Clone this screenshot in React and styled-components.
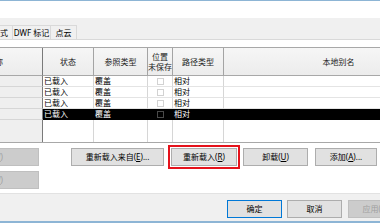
import styled, { createGlobalStyle } from "styled-components";

const GlobalStyle = createGlobalStyle`
  html, body {
    margin: 0;
    padding: 0;
    background: #fff;
  }
  body {
    font-family: "Noto Sans", "Noto Sans CJK SC", sans-serif;
    font-size: 8px;
    color: #000;
  }
`;

const rows = [
  { status: "已载入", type: "覆盖", path: "相对" },
  { status: "已载入", type: "覆盖", path: "相对" },
  { status: "已载入", type: "覆盖", path: "相对" },
  { status: "已载入", type: "覆盖", path: "相对", selected: true },
];

const columns = "43px 51px 54px 25px 51px 230px";

function App() {
  return (
    <>
      <GlobalStyle />
      <Window>
        <TitleBar />
        <TabStrip>
          <Tab $width={50} $offset={-37} $align="flex-end">
            CAD 格式
          </Tab>
          <Tab $width={38}>DWF 标记</Tab>
          <Tab $width={26}>点云</Tab>
        </TabStrip>

        <TabPage>
          <Table>
            <HeaderRow>
              <HeaderCell $first>参照名称</HeaderCell>
              <HeaderCell>状态</HeaderCell>
              <HeaderCell>参照类型</HeaderCell>
              <HeaderCell $twoLine>
                位置
                <br />
                未保存
              </HeaderCell>
              <HeaderCell>路径类型</HeaderCell>
              <HeaderCell>本地别名</HeaderCell>
            </HeaderRow>
            {rows.map((row, i) => (
              <Row key={i}>
                <RowHead />
                <Cell $selected={row.selected}>{row.status}</Cell>
                <Cell $selected={row.selected}>{row.type}</Cell>
                <Cell $selected={row.selected} $center>
                  <Check $selected={row.selected} />
                </Cell>
                <Cell $selected={row.selected}>{row.path}</Cell>
                <Cell $selected={row.selected} />
              </Row>
            ))}
            <FillerRow>
              <RowHead />
              <Cell />
              <Cell />
              <Cell />
              <Cell />
              <Cell />
            </FillerRow>
          </Table>

          <ButtonRow>
            <SideButton disabled>
              保存位置(<u>V</u>)
            </SideButton>
            <Button $width={93} style={{ marginLeft: 32 }}>
              重新载入来自(<u>E</u>)...
            </Button>
            <Highlight>
              <Button $width={66}>
                重新载入(<u>R</u>)
              </Button>
            </Highlight>
            <Button $width={65} style={{ marginLeft: 3 }}>
              卸载(<u>U</u>)
            </Button>
            <Button $width={62} style={{ marginLeft: 7 }}>
              添加(<u>A</u>)...
            </Button>
          </ButtonRow>
          <SecondRow>
            <SideButton disabled>
              管理工作集(<u>W</u>)
            </SideButton>
          </SecondRow>
        </TabPage>

        <Footer>
          <Button $width={55} $default>
            确定
          </Button>
          <Button $width={55}>取消</Button>
          <Button $width={55} disabled style={{ marginLeft: 1 }}>
            应用(<u>A</u>)
          </Button>
        </Footer>
      </Window>
    </>
  );
}

const Window = styled.div`
  width: 380px;
  height: 223px;
  box-sizing: border-box;
  overflow: hidden;
  display: flex;
  flex-direction: column;
  border-top: 1px solid #8db5d5;
  border-bottom: 2px solid #8db5d5;
  background: #f0f0f0;
`;

const TitleBar = styled.div`
  height: 17px;
  background: #fff;
  flex-shrink: 0;
`;

const TabStrip = styled.div`
  height: 21px;
  padding-top: 7px;
  box-sizing: border-box;
  display: flex;
  align-items: stretch;
  flex-shrink: 0;
`;

const Tab = styled.div`
  width: ${(p) => p.$width}px;
  margin-left: ${(p) => p.$offset || 0}px;
  flex-shrink: 0;
  box-sizing: border-box;
  display: flex;
  align-items: center;
  justify-content: ${(p) => p.$align || "center"};
  padding-right: ${(p) => (p.$align ? 4 : 0)}px;
  border: 1px solid #d9d9d9;
  border-bottom: none;
  border-left: none;
  background: #f0f0f0;
  white-space: nowrap;
  line-height: 1;
`;

const TabPage = styled.div`
  flex: 1;
  background: #fff;
  border-top: 1px solid #d9d9d9;
  padding-top: 7px;
  display: flex;
  flex-direction: column;
`;

const Table = styled.div`
  display: grid;
  grid-template-columns: ${columns};
  width: 454px;
  border-top: 1px solid #a8a8a8;
  border-bottom: 1px solid #a8a8a8;
`;

const HeaderRow = styled.div`
  display: contents;
`;

const HeaderCell = styled.div`
  height: 28px;
  box-sizing: border-box;
  background: linear-gradient(#f6f6f6, #ececec);
  border-right: 1px solid ${(p) => (p.$first ? "#7a7a7a" : "#a4a4a4")};
  border-bottom: 1px solid #a8a8a8;
  display: flex;
  align-items: center;
  justify-content: ${(p) => (p.$first ? "flex-end" : "center")};
  padding-right: ${(p) => (p.$first ? 39 : 0)}px;
  text-align: center;
  line-height: ${(p) => (p.$twoLine ? "10px" : "1")};
  white-space: nowrap;
  color: #222;
`;

const Row = styled.div`
  display: contents;
`;

const FillerRow = styled.div`
  display: contents;

  & > div {
    height: 22px;
    border-bottom: none;
  }
`;

const RowHead = styled.div`
  height: 11px;
  box-sizing: border-box;
  background: #efefef;
  border-right: 1px solid #7a7a7a;
  border-bottom: 1px solid #d6d6d6;
`;

const Cell = styled.div`
  height: 11px;
  box-sizing: border-box;
  padding-left: 1px;
  display: flex;
  align-items: center;
  justify-content: ${(p) => (p.$center ? "center" : "flex-start")};
  background: ${(p) => (p.$selected ? "#000" : "#fff")};
  color: ${(p) => (p.$selected ? "#fff" : "#000")};
  border-right: 1px solid ${(p) => (p.$selected ? "#000" : "#d6d6d6")};
  border-bottom: 1px solid ${(p) => (p.$selected ? "#000" : "#e4e4e4")};
  white-space: nowrap;
  line-height: 1;
`;

const Check = styled.span`
  width: 7px;
  height: 7px;
  box-sizing: border-box;
  border: 1px solid ${(p) => (p.$selected ? "#4a4a4a" : "#d2d2d2")};
  background: ${(p) => (p.$selected ? "#000" : "#fff")};
`;

const Button = styled.button`
  width: ${(p) => p.$width}px;
  height: 18px;
  flex-shrink: 0;
  box-sizing: border-box;
  margin: 0;
  padding: 0;
  font-family: inherit;
  font-size: 8px;
  line-height: 1;
  color: #000;
  background: #e1e1e1;
  border: 1px solid ${(p) => (p.$default ? "#0078d7" : "#adadad")};
  white-space: nowrap;

  u {
    text-decoration-thickness: 1px;
  }

  &:disabled {
    background: #cccccc;
    border-color: #bfbfbf;
    color: #a0a0a0;
  }
`;

const SideButton = styled(Button)`
  width: 80px;
  margin-left: -41px;
  display: flex;
  align-items: center;
  justify-content: flex-end;
  padding-right: 35px;
  overflow: hidden;
`;

const ButtonRow = styled.div`
  margin-top: 1px;
  height: 25px;
  display: flex;
  align-items: center;
`;

const Highlight = styled.div`
  margin-left: 4px;
  padding: 1px;
  border: 2px solid #e5121b;
  display: flex;
`;

const SecondRow = styled.div`
  margin-top: 2px;
  display: flex;
`;

const Footer = styled.div`
  height: 28px;
  flex-shrink: 0;
  box-sizing: border-box;
  border-top: 1px solid #e2e2e2;
  padding: 6px 0 0 227px;
  display: flex;
  align-items: flex-start;
  gap: 5px;
  background: #f0f0f0;
`;

export default App;
